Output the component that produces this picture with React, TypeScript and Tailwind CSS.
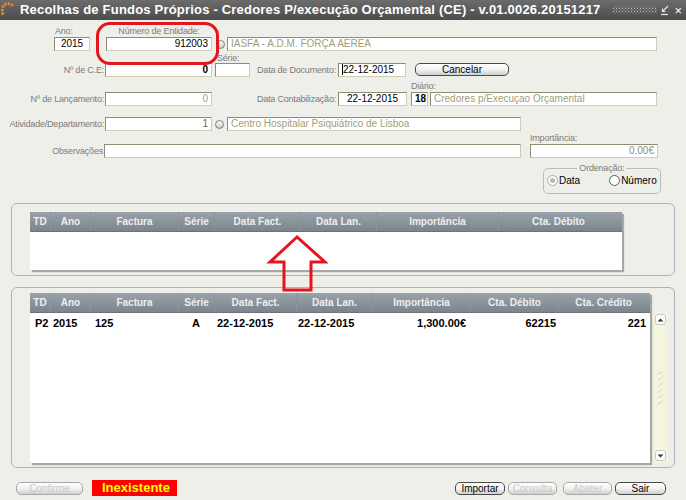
import React from 'react';

const LABEL = "font-['Liberation_Sans',Arial,sans-serif] text-[9px] tracking-[-0.2px] leading-[10px] whitespace-nowrap text-[#7b7b7b]";

function Field({ w, children, className = '' }: { w: string; children?: React.ReactNode; className?: string }) {
  return (
    <div
      className={`${w} h-[14px] shrink-0 bg-white border border-t-[#8f8c74] border-l-[#8f8c74] border-r-[#cfccb6] border-b-[#cfccb6] px-[3px] text-[10px] leading-[12px] whitespace-nowrap overflow-hidden font-['Liberation_Sans',Arial,sans-serif] ${className}`}
    >
      {children}
    </div>
  );
}

function Btn({ w, label, disabled = false }: { w: string; label: string; disabled?: boolean }) {
  return (
    <div
      className={`${w} h-[13px] shrink-0 rounded-[5px] border bg-gradient-to-b from-white via-[#f2f2f2] to-[#cfcfcf] text-center text-[10px] leading-[11px] font-['Liberation_Sans',Arial,sans-serif] ${
        disabled ? 'border-[#a8a8a8] text-[#c9c9c9]' : 'border-[#4a4a4a] text-black'
      }`}
    >
      {label}
    </div>
  );
}

function Lookup() {
  return <div className="w-[9px] h-[9px] shrink-0 rounded-full border border-[#7d7d7d] bg-gradient-to-b from-white to-[#c9c9c9]" />;
}

const cols1 = [
  { t: 'TD', w: 'w-[20px]' },
  { t: 'Ano', w: 'w-[40px]' },
  { t: 'Factura', w: 'w-[88px]' },
  { t: 'Série', w: 'w-[36px]' },
  { t: 'Data Fact.', w: 'w-[86px]' },
  { t: 'Data Lan.', w: 'w-[76px]' },
  { t: 'Importância', w: 'w-[122px]' },
  { t: 'Cta. Débito', w: 'w-[120px]' },
];

const cols2 = [
  { t: 'TD', w: 'w-[20px]' },
  { t: 'Ano', w: 'w-[40px]' },
  { t: 'Factura', w: 'w-[88px]' },
  { t: 'Série', w: 'w-[36px]' },
  { t: 'Data Fact.', w: 'w-[82px]' },
  { t: 'Data Lan.', w: 'w-[76px]' },
  { t: 'Importância', w: 'w-[98px]' },
  { t: 'Cta. Débito', w: 'w-[88px]' },
  { t: 'Cta. Crédito', w: 'w-[90px]' },
];

function Header({ cols }: { cols: { t: string; w: string }[] }) {
  return (
    <div className="flex h-[20px] bg-gradient-to-b from-[#9aa2aa] to-[#7c848d] border-b border-[#6b737b]">
      {cols.map((c, i) => (
        <div
          key={i}
          className={`${c.w} shrink-0 text-center text-[10px] leading-[19px] font-bold text-[#eeeeee] ${i > 0 ? 'border-l border-[#8a929a]' : ''}`}
        >
          {c.t}
        </div>
      ))}
    </div>
  );
}

export default function App() {
  return (
    <div className="w-[686px] h-[500px] bg-[#efefea] overflow-hidden relative font-['Liberation_Sans',Arial,sans-serif]">
      {/* Title bar */}
      <div className="h-[20px] flex items-center bg-gradient-to-b from-[#6c6c6c] to-[#4c4c4c]">
        <svg width="16" height="16" viewBox="0 0 16 16" className="ml-[1px] shrink-0">
          <path d="M12 3.5 A6 6 0 0 0 3 13" fill="none" stroke="#f08a1c" strokeWidth="3" strokeDasharray="2.2 1.2" />
        </svg>
        <div className="ml-[3px] text-[13px] font-bold text-white whitespace-nowrap tracking-[0.2px]">
          Recolhas de Fundos Próprios - Credores P/execução Orçamental (CE) - v.01.0026.20151217
        </div>
        <svg width="44" height="10" className="ml-auto shrink-0">
          <defs>
            <pattern id="dots" width="3" height="3" patternUnits="userSpaceOnUse">
              <rect x="0" y="0" width="1" height="1" fill="#bdbdbd" />
              <rect x="1.5" y="1.5" width="1" height="1" fill="#9a9a9a" />
            </pattern>
          </defs>
          <rect x="0" y="1" width="44" height="8" fill="url(#dots)" />
        </svg>
        <svg width="10" height="12" viewBox="0 0 10 12" className="ml-[3px] shrink-0">
          <path d="M1 10.5 H8" stroke="#e6e6e6" strokeWidth="1.2" />
          <path d="M8 2 L2.5 7.5 M2.5 4.5 V7.5 H5.5" stroke="#e6e6e6" strokeWidth="1.2" fill="none" />
        </svg>
        <div className="ml-[4px] mr-[4px] text-[13px] leading-[13px] text-white">×</div>
      </div>

      {/* Form */}
      <div className="relative">
        <div className="flex mt-[5px] h-[11px] items-end">
          <div className={`w-[106px] pl-[55px] ${LABEL}`}>Ano:</div>
          <div className={`w-[106px] text-center ${LABEL}`}>Número de Entidade:</div>
        </div>
        <div className="flex mt-[1px] items-center">
          <div className="w-[54px] shrink-0" />
          <Field w="w-[36px]" className="text-center text-black">2015</Field>
          <div className="w-[16px] shrink-0" />
          <Field w="w-[106px]" className="text-right text-black">912003</Field>
          <div className="w-[4px] shrink-0" />
          <Lookup />
          <div className="w-[2px] shrink-0" />
          <Field w="w-[430px]" className="text-[#a19d7c]">IASFA - A.D.M. FORÇA AEREA</Field>
        </div>
        <div className={`mt-[2px] h-[10px] ml-[217px] ${LABEL}`}>Série:</div>
        <div className="flex items-center h-[14px]">
          <div className={`w-[105px] shrink-0 text-right pr-[1px] ${LABEL}`}>Nº de C.E:</div>
          <Field w="w-[107px]" className="text-right text-black font-bold">0</Field>
          <div className="w-[3px] shrink-0" />
          <Field w="w-[35px]" />
          <div className={`w-[88px] shrink-0 text-right pr-[2px] ${LABEL}`}>Data de Documento:</div>
          <Field w="w-[68px]" className="text-black">
            <span className="border-l border-black">22-12-2015</span>
          </Field>
          <div className="w-[9px] shrink-0" />
          <div className="-mt-[2px]">
            <Btn w="w-[94px]" label="Cancelar" />
          </div>
        </div>
        <div className={`mt-[4px] h-[10px] ml-[411px] ${LABEL}`}>Diário:</div>
        <div className="flex items-center h-[14px] mt-[1px]">
          <div className={`w-[105px] shrink-0 text-right pr-[1px] ${LABEL}`}>Nº de Lançamento:</div>
          <Field w="w-[107px]" className="text-right text-[#9a9a9a]">0</Field>
          <div className={`w-[126px] shrink-0 text-right pr-[2px] ${LABEL}`}>Data Contabilização:</div>
          <Field w="w-[69px]" className="text-center text-black">22-12-2015</Field>
          <div className="w-[4px] shrink-0" />
          <Field w="w-[17px]" className="text-center text-black font-bold px-0">18</Field>
          <div className="w-[2px] shrink-0" />
          <Field w="w-[227px]" className="text-[#a19d7c]">Credores p/Execuçao Orçamental</Field>
        </div>
        <div className="flex items-center h-[14px] mt-[11px]">
          <div className={`w-[105px] shrink-0 text-right pr-[1px] ${LABEL}`}>Atividade/Departamento:</div>
          <Field w="w-[107px]" className="text-right text-[#666]">1</Field>
          <div className="w-[3px] shrink-0" />
          <Lookup />
          <div className="w-[3px] shrink-0" />
          <Field w="w-[294px]" className="text-[#a19d7c]">Centro Hospitalar Psiquiátrico de Lisboa</Field>
        </div>
        <div className={`mt-[2px] h-[10px] ml-[530px] ${LABEL}`}>Importância:</div>
        <div className="flex items-center h-[14px] mt-[1px]">
          <div className={`w-[104px] shrink-0 text-right pr-[1px] ${LABEL}`}>Observações</div>
          <Field w="w-[417px]" />
          <div className="w-[9px] shrink-0" />
          <Field w="w-[128px]" className="text-right text-[#8a8a8a]">0.00€</Field>
        </div>

        {/* Ordenação */}
        <fieldset className="ml-[543px] mt-[5px] w-[114px] h-[31px] border border-[#bdbdb4] rounded-[5px] px-[3px]">
          <legend className={`mx-auto px-[2px] ${LABEL}`}>Ordenação:</legend>
          <div className="flex items-center h-[15px] text-[10px] text-black">
            <div className="w-[11px] h-[11px] rounded-full border border-[#a8a8a8] bg-white flex items-center justify-center">
              <div className="w-[5px] h-[5px] rounded-full bg-[#b8b8b8]" />
            </div>
            <span className="ml-[1px]">Data</span>
            <div className="ml-[29px] w-[11px] h-[11px] rounded-full border border-[#5a5a5a] bg-white" />
            <span className="ml-[1px]">Número</span>
          </div>
        </fieldset>

        {/* Red annotation */}
        <div className="absolute left-[96px] top-[-3px] w-[123px] h-[43px] border-[3px] border-[#e3161e] rounded-[14px]" />
      </div>

      {/* Panel 1 */}
      <div className="relative ml-[11px] mt-[9px] w-[664px] h-[73px] border border-[#aab4bb] rounded-[6px] pt-[8px] pl-[18px]">
        <div className="w-[592px] h-[58px] bg-white shadow-[2px_2px_1px_rgba(0,0,0,0.3)]">
          <Header cols={cols1} />
        </div>
      </div>

      {/* Panel 2 */}
      <div className="ml-[11px] mt-[11px] w-[664px] h-[181px] border border-[#aab4bb] rounded-[6px] pt-[5px] pl-[18px] flex">
        <div className="w-[620px] h-[170px] bg-white shadow-[2px_2px_1px_rgba(0,0,0,0.3)] shrink-0">
          <Header cols={cols2} />
          <div className="flex h-[16px] items-center text-[11px] font-bold text-black mt-[2px]">
            <div className="w-[20px] pl-[5px]">P2</div>
            <div className="w-[40px] pl-[3px]">2015</div>
            <div className="w-[88px] pl-[5px]">125</div>
            <div className="w-[36px] text-center">A</div>
            <div className="w-[82px] pl-[3px]">22-12-2015</div>
            <div className="w-[76px] pl-[2px]">22-12-2015</div>
            <div className="w-[98px] text-right pr-[4px]">1,300.00€</div>
            <div className="w-[88px] text-right pr-[2px]">62215</div>
            <div className="w-[90px] text-right pr-[2px]">221</div>
          </div>
        </div>
        <div className="ml-[4px] mt-[20px] w-[13px] h-[149px] rounded-[3px] bg-[#f4f4df] flex flex-col items-center justify-between py-[1px]">
          <div className="w-[11px] h-[11px] rounded-[3px] bg-white border border-[#c8c8bc] flex items-center justify-center">
            <svg width="7" height="4"><path d="M0.5 3.5 L3.5 0.5 L6.5 3.5 Z" fill="#333" /></svg>
          </div>
          <svg width="8" height="34" viewBox="0 0 8 34">
            {[0, 6, 12, 18, 24, 30].map(y => (
              <path key={y} d={`M1 ${y + 3} L6 ${y}`} stroke="#b5b5a5" strokeWidth="1" strokeDasharray="1 1" />
            ))}
          </svg>
          <div className="w-[11px] h-[11px] rounded-[3px] bg-white border border-[#c8c8bc] flex items-center justify-center">
            <svg width="7" height="4"><path d="M0.5 0.5 L3.5 3.5 L6.5 0.5 Z" fill="#333" /></svg>
          </div>
        </div>
      </div>

      {/* Bottom bar */}
      <div className="flex items-center mt-[12px] h-[16px]">
        <div className="ml-[16px]">
          <Btn w="w-[67px]" label="Confirme" disabled />
        </div>
        <div className="ml-[9px] w-[85px] h-[16px] bg-[#ff0000] text-[#ffff00] font-bold text-[13px] leading-[16px] pl-[10px]">
          Inexistente
        </div>
        <div className="ml-auto mr-[20px] flex items-center">
          <Btn w="w-[50px]" label="Importar" />
          <div className="w-[3px]" />
          <Btn w="w-[49px]" label="Consulta" disabled />
          <div className="w-[6px]" />
          <Btn w="w-[49px]" label="Abater" disabled />
          <div className="w-[3px]" />
          <Btn w="w-[51px]" label="Sair" />
        </div>
      </div>

      {/* Red arrow annotation */}
      <svg className="absolute left-[266px] top-[234px]" width="62" height="60" viewBox="0 0 62 60">
        <path d="M31 3 L4 28 L18 28 L18 56 L45 56 L45 28 L59 28 Z" fill="none" stroke="#e3161e" strokeWidth="3" strokeLinejoin="miter" />
      </svg>
    </div>
  );
}
